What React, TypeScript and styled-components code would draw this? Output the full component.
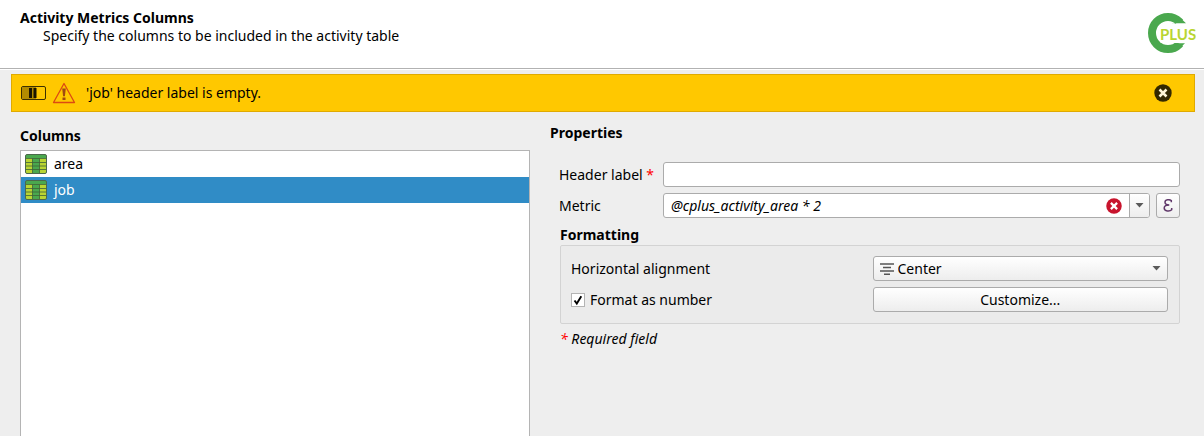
import React, { useState } from "react";
import styled, { createGlobalStyle } from "styled-components";

const GlobalStyle = createGlobalStyle`
  *, *::before, *::after { box-sizing: border-box; }
  body {
    margin: 0;
    background: #eeeeee;
    color: #000000;
    font: 14px/20px "Noto Sans", "Open Sans", sans-serif;
  }
  button, input, select { font: inherit; color: inherit; margin: 0; }
  svg { display: block; flex: none; }
`;

const Page = styled.div`
  display: flex;
  flex-direction: column;
  min-height: 100vh;
`;

const Header = styled.header`
  display: flex;
  justify-content: space-between;
  align-items: flex-start;
  height: 70px;
  padding: 8px 8px 0 20px;
  background: #ffffff;
  border-bottom: 1px solid #ffffff;
  box-shadow: inset 0 -1px 0 #b2b2b2;
`;

const Title = styled.h1`
  margin: 0;
  font-size: 14px;
  line-height: 20px;
`;

const Subtitle = styled.p`
  margin: 0 0 0 23px;
  line-height: 16px;
`;

const MessageBar = styled.div`
  display: flex;
  align-items: center;
  height: 38px;
  margin: 4px 9px 0 11px;
  padding: 0 22px 0 9px;
  background: #ffc800;
  border: 1px solid #e0aa00;
`;

const MessageIcons = styled.span`
  display: flex;
  align-items: center;
  gap: 6px;
`;

const Message = styled.span`
  flex: 1;
  margin-left: 10px;
`;

const IconButton = styled.button`
  display: flex;
  align-items: center;
  justify-content: center;
  padding: 0;
  border: 0;
  background: none;
`;

const Body = styled.main`
  flex: 1;
  display: grid;
  grid-template-columns: minmax(0, 510fr) minmax(0, 630fr);
  gap: 20px;
  padding: 11px 24px 0 20px;
`;

const ColumnsPanel = styled.section`
  display: flex;
  flex-direction: column;
  padding-top: 3px;
`;

const Heading = styled.h2`
  margin: 0;
  font-size: 14px;
  line-height: 20px;
`;

const List = styled.ul`
  flex: 1;
  margin: 4px 0 0;
  padding: 0;
  list-style: none;
  background: #ffffff;
  border: 1px solid #b4b4b4;
  border-bottom: 0;
`;

const ListItem = styled.li<{ $selected: boolean }>`
  display: flex;
  align-items: center;
  gap: 7px;
  height: 26px;
  padding-left: 4px;
  background: ${(p) => (p.$selected ? "#308cc6" : "transparent")};
  color: ${(p) => (p.$selected ? "#ffffff" : "#000000")};
`;

const Fields = styled.div`
  display: grid;
  grid-template-columns: 98px minmax(0, 1fr);
  align-items: center;
  gap: 6px;
  margin: 19px 0 0 9px;
`;

const Required = styled.span`
  color: #ff0000;
`;

const TextInput = styled.input`
  width: 100%;
  height: 25px;
  padding: 0 7px;
  background: #ffffff;
  border: 1px solid #ababab;
  border-radius: 3px;
  outline: none;
`;

const MetricRow = styled.div`
  display: flex;
  gap: 6px;
`;

const Combo = styled.div`
  flex: 1;
  display: flex;
  height: 25px;
  background: #ffffff;
  border: 1px solid #ababab;
  border-radius: 3px;
  overflow: hidden;
`;

const ComboInput = styled.input`
  flex: 1;
  min-width: 0;
  padding: 0 7px;
  border: 0;
  outline: none;
  background: none;
  font-style: italic;
`;

const ComboArrow = styled(IconButton)`
  width: 20px;
  margin-left: 7px;
  border-left: 1px solid #ababab;
  background: linear-gradient(#ffffff, #ededed);
`;

const PushButton = styled.button`
  display: flex;
  align-items: center;
  justify-content: center;
  height: 25px;
  padding: 0;
  background: linear-gradient(#ffffff, #ededed);
  border: 1px solid #ababab;
  border-radius: 3px;
`;

const ExpressionButton = styled(PushButton)`
  width: 24px;
`;

const Formatting = styled.section`
  margin: 7px 0 0 10px;
`;

const GroupBox = styled.div`
  display: grid;
  grid-template-columns: 1fr 1fr;
  align-items: center;
  gap: 6px;
  padding: 10px 11px 11px 10px;
  background: #ebebeb;
  border: 1px solid #d3d3d3;
  border-radius: 2px;
`;

const Stack = styled.span`
  display: grid;
  align-items: center;
  > * { grid-area: 1 / 1; }
  > svg { pointer-events: none; z-index: 1; }
`;

const SelectStack = styled(Stack)`
  > svg:first-child { margin-left: 7px; }
  > svg:last-child { justify-self: end; margin-right: 7px; }
`;

const Select = styled.select`
  appearance: none;
  width: 100%;
  height: 25px;
  padding: 0 24px;
  background: linear-gradient(#ffffff, #ededed);
  border: 1px solid #ababab;
  border-radius: 3px;
  outline: none;
`;

const CheckLabel = styled.label`
  display: flex;
  align-items: center;
  gap: 5px;
`;

const CheckBox = styled.input`
  appearance: none;
  width: 14px;
  height: 14px;
  background: #ffffff;
  border: 1px solid #b4b4b4;
  &:not(:checked) + svg { visibility: hidden; }
`;

const Note = styled.p`
  margin: 5px 0 0;
  font-style: italic;
`;

const Logo = () => (
  <svg width="48" height="48" viewBox="0 0 48 48" role="img" aria-label="CPLUS">
    <circle cx="20" cy="25" r="16" fill="none" stroke="#4aa84e" strokeWidth="8" />
    <path d="M12.500 17H26L29 14.500 35 12 48 8V42L37 39 30 35H12.500Z" fill="#ffffff" />
    <path d="M25 15.500 34 11.500 38 15.200H24ZM26 35.200H37L34 38Z" fill="#4aa84e" />
    <text x="12" y="32" fontFamily="Lato, sans-serif" fontWeight="700" fontSize="15" fill="#b9d532">
      PLUS
    </text>
  </svg>
);

const CountdownIcon = () => (
  <svg width="25" height="14" viewBox="0 0 25 14">
    <rect x=".5" y=".5" width="24" height="13" rx="1.5" fill="#ffc800" stroke="#3c3000" />
    <path d="M1 1h14v12H1z" fill="#b38c00" />
    <path d="M8 2h3v10H8zM12.500 2h3v10h-3z" fill="#1a1500" />
  </svg>
);

const WarningIcon = () => (
  <svg width="24" height="22" viewBox="0 0 24 22">
    <path d="M12 1.500 22.500 20.500H1.500Z" fill="none" stroke="#dc4a12" strokeWidth="1.300" strokeLinejoin="round" />
    <path d="M10.200 6.500h3.600l-.9 7.800h-1.800zM10.500 15.500h3v2.500h-3z" fill="#a04a10" />
  </svg>
);

const CrossIcon = ({ size, fill, mark }: { size: number; fill: string; mark: string }) => (
  <svg width={size} height={size} viewBox="0 0 18 18">
    <circle cx="9" cy="9" r="8.700" fill={fill} />
    <path d="M5.500 5.500l7 7M12.500 5.500l-7 7" stroke={mark} strokeWidth="2.500" />
  </svg>
);

const TableIcon = () => (
  <svg width="22" height="20" viewBox="0 0 22 20">
    <rect x=".5" y=".5" width="21" height="19" rx="1.500" fill="#b9d532" />
    <path d="M1 1h20v3H1zM7.500 4h7v15h-7z" fill="#4aa84e" />
    <path
      d="M1 4.500h20M1 8.500h20M1 12h20M1 15.500h20M7.500 4.500v15M14.500 4.500v15"
      stroke="#3f6238"
      strokeOpacity=".8"
      fill="none"
    />
    <rect x=".5" y=".5" width="21" height="19" rx="1.500" fill="none" stroke="#4b694b" />
  </svg>
);

const ArrowIcon = () => (
  <svg width="9" height="5" viewBox="0 0 9 5">
    <path d="M.5 0h8L4.500 4.500Z" fill="#5a5a5a" />
  </svg>
);

const CenterIcon = () => (
  <svg width="14" height="12" viewBox="0 0 14 12">
    <path d="M0 1h14M3 4.500h8M0 8h14M4 11.300h6" stroke="#555555" strokeWidth="1.400" />
  </svg>
);

const CheckIcon = () => (
  <svg width="14" height="14" viewBox="0 0 14 14">
    <path d="M3.500 7.500 5.800 10.500 10.300 3.300" fill="none" stroke="#000000" strokeWidth="1.900" />
  </svg>
);

const EpsilonIcon = () => (
  <svg width="10" height="13" viewBox="0 0 10 13">
    <path
      d="M8.300 3.300V1.500C6.500.3 2 .3 2 3.300 2 5.200 3.700 5.900 6.300 5.900 3.200 5.900 1.200 6.900 1.200 9 1.200 12.600 7 12.600 8.700 10.800V9"
      fill="none"
      stroke="#61396b"
      strokeWidth="1.500"
    />
  </svg>
);

const columns = ["area", "job"];

export default function App() {
  const [selected, setSelected] = useState("job");
  const [label, setLabel] = useState("");
  const [metric, setMetric] = useState("@cplus_activity_area * 2");

  return (
    <Page>
      <GlobalStyle />
      <Header>
        <div>
          <Title>Activity Metrics Columns</Title>
          <Subtitle>Specify the columns to be included in the activity table</Subtitle>
        </div>
        <Logo />
      </Header>
      <MessageBar role="alert">
        <MessageIcons>
          <CountdownIcon />
          <WarningIcon />
        </MessageIcons>
        <Message>'job' header label is empty.</Message>
        <IconButton type="button" aria-label="Close message">
          <CrossIcon size={18} fill="#332800" mark="#fff6d6" />
        </IconButton>
      </MessageBar>
      <Body>
        <ColumnsPanel>
          <Heading>Columns</Heading>
          <List role="listbox" aria-label="Columns">
            {columns.map((name) => (
              <ListItem
                key={name}
                role="option"
                aria-selected={selected === name}
                $selected={selected === name}
                onClick={() => setSelected(name)}
              >
                <TableIcon />
                {name}
              </ListItem>
            ))}
          </List>
        </ColumnsPanel>
        <section>
          <Heading>Properties</Heading>
          <Fields>
            <label htmlFor="header-label">
              Header label <Required>*</Required>
            </label>
            <TextInput id="header-label" value={label} onChange={(e) => setLabel(e.target.value)} />
            <label htmlFor="metric">Metric</label>
            <MetricRow>
              <Combo>
                <ComboInput id="metric" value={metric} onChange={(e) => setMetric(e.target.value)} />
                <IconButton type="button" aria-label="Clear metric" onClick={() => setMetric("")}>
                  <CrossIcon size={16} fill="#c8142d" mark="#ffffff" />
                </IconButton>
                <ComboArrow type="button" aria-label="Choose metric">
                  <ArrowIcon />
                </ComboArrow>
              </Combo>
              <ExpressionButton type="button" aria-label="Expression builder">
                <EpsilonIcon />
              </ExpressionButton>
            </MetricRow>
          </Fields>
          <Formatting>
            <Heading>Formatting</Heading>
            <GroupBox>
              <label htmlFor="alignment">Horizontal alignment</label>
              <SelectStack>
                <CenterIcon />
                <Select id="alignment" defaultValue="Center">
                  <option>Center</option>
                </Select>
                <ArrowIcon />
              </SelectStack>
              <CheckLabel>
                <Stack>
                  <CheckBox type="checkbox" defaultChecked />
                  <CheckIcon />
                </Stack>
                Format as number
              </CheckLabel>
              <PushButton type="button">Customize...</PushButton>
            </GroupBox>
            <Note>
              <Required>*</Required> Required field
            </Note>
          </Formatting>
        </section>
      </Body>
    </Page>
  );
}
